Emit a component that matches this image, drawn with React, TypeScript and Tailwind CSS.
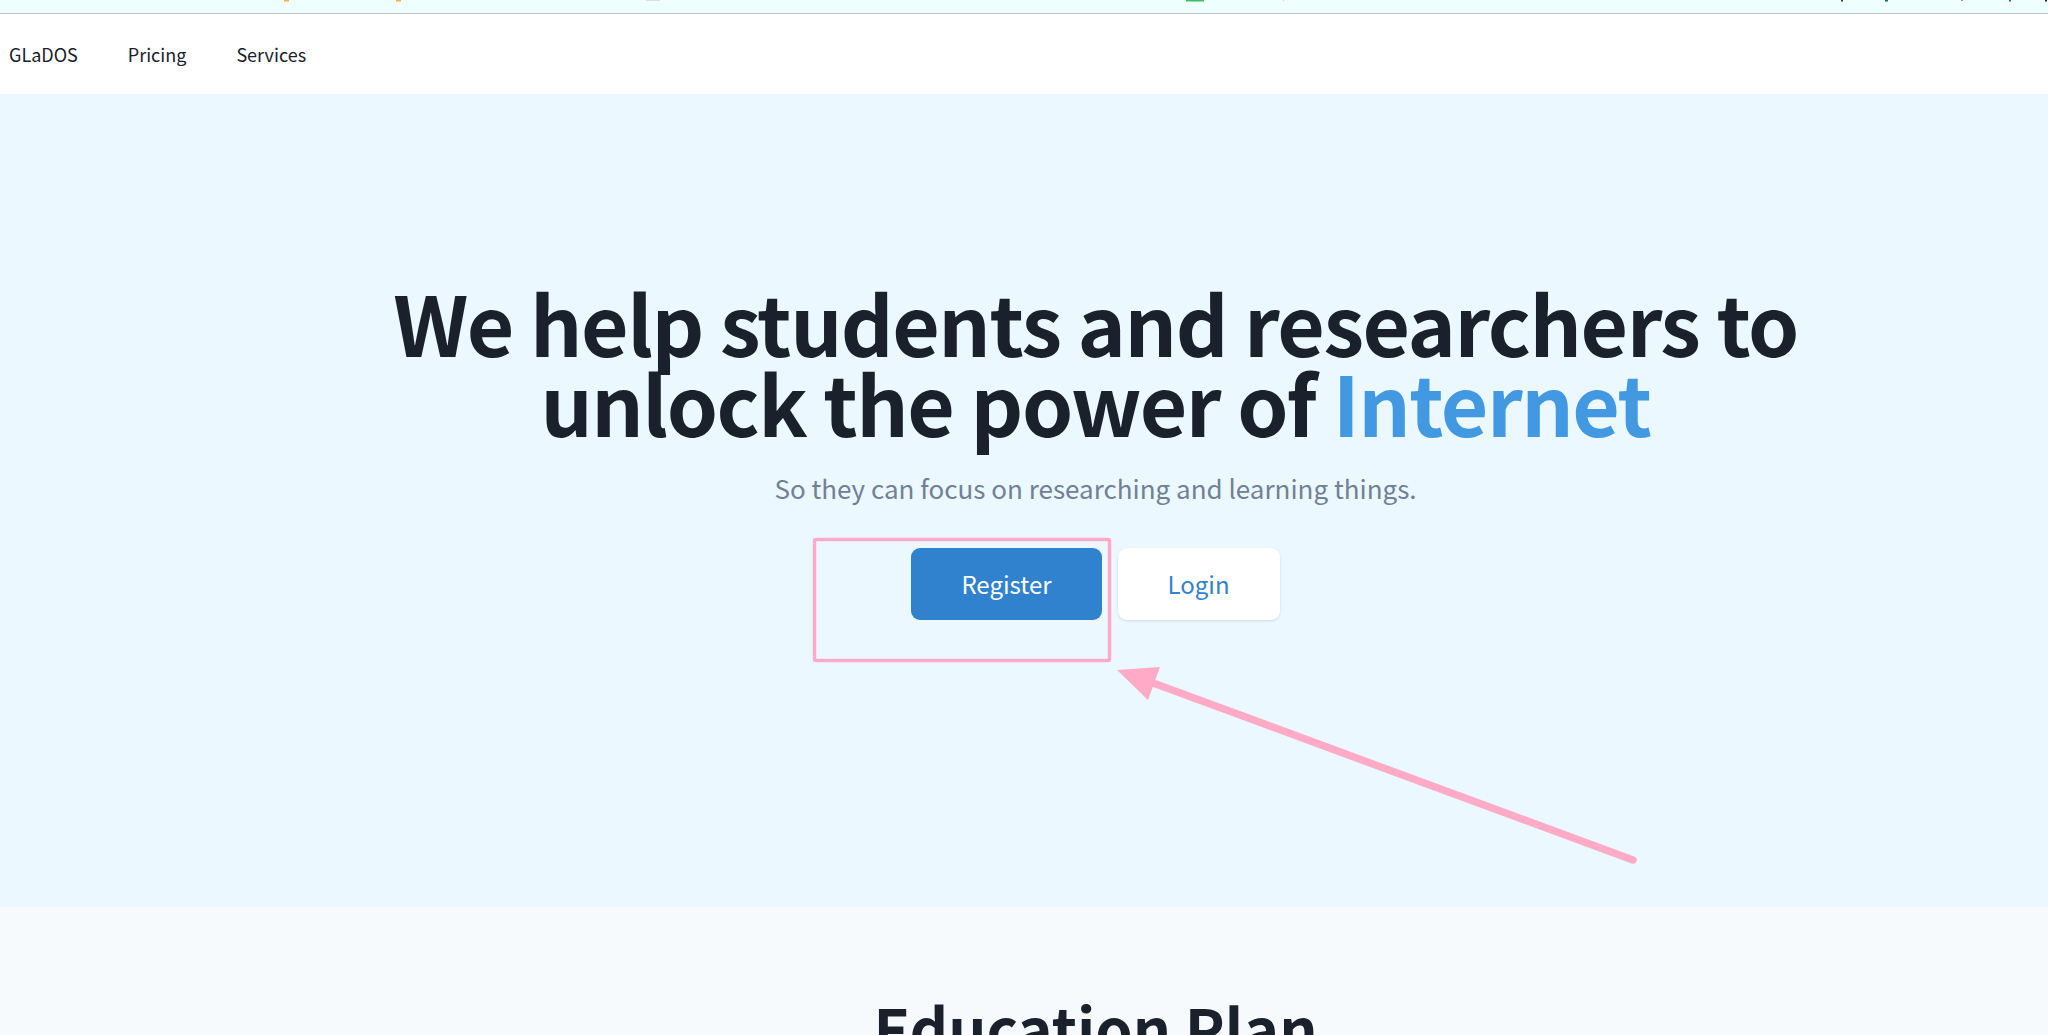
export default function App() {
  return (
    <div className="relative h-screen w-full overflow-hidden font-['Noto_Sans_CJK_SC','Noto_Sans',sans-serif] text-[#1a202c]">
      {/* browser strip left over at the top of the capture */}
      <div className="relative h-[14px] bg-[#effffe] border-b border-[#b9c9c7]">
        <svg className="absolute left-0 top-0" width="2048" height="3">
          <rect x="284" y="0" width="5" height="1.5" fill="#f4b042" />
          <rect x="396" y="0" width="5" height="1.5" fill="#f4b042" />
          <rect x="646" y="0" width="14" height="1" fill="#dddddd" />
          <rect x="1186" y="0" width="18" height="1.5" fill="#3fbf5f" />
          <rect x="1283" y="0" width="1" height="1" fill="#cccccc" />
          <rect x="1841" y="0" width="2" height="1.5" fill="#553311" />
          <rect x="1885" y="0" width="3" height="1.5" fill="#0b6f7f" />
          <rect x="1961" y="0" width="2" height="1" fill="#8899aa" />
          <rect x="2009" y="0" width="2" height="1.5" fill="#1a6fb0" />
          <rect x="2045" y="0" width="2" height="1.5" fill="#222222" />
        </svg>
      </div>

      {/* NAV */}
      <nav className="h-[80px] bg-white flex items-center pl-[9px] gap-[50px] text-[18px] text-[#1a202c]">
        <a>GLaDOS</a>
        <a>Pricing</a>
        <a>Services</a>
      </nav>

      {/* HERO */}
      <section className="h-[813px] bg-[#ebf8ff] flex flex-col items-center pl-[143px] pt-[188px]">
        <h1 className="text-center font-bold text-[82px] leading-[80px] tracking-[-1.5px] whitespace-nowrap text-[#1a202c]">
          We help students and researchers to
          <br />
          unlock the power of <span className="text-[#4299e1]">Internet</span>
        </h1>
        <p className="mt-[26px] text-[26px] leading-[40px] text-[#718096]">
          So they can focus on researching and learning things.
        </p>
        <div className="mt-[40px] flex gap-4">
          <button className="h-[72px] px-[50px] rounded-[9px] bg-[#3182ce] text-white text-[24px]">
            Register
          </button>
          <button className="h-[72px] px-[50px] rounded-[9px] bg-white text-[#3182ce] text-[24px] shadow-[0_1px_3px_rgba(0,0,0,0.12)]">
            Login
          </button>
        </div>
      </section>

      {/* NEXT SECTION */}
      <section className="h-[128px] bg-[#f7fafc] flex flex-col items-center pl-[143px] pt-[85px]">
        <h2 className="font-bold text-[60px] leading-[70px] whitespace-nowrap text-[#1a202c]">
          Education Plan
        </h2>
      </section>

      {/* annotation drawn over the capture */}
      <svg
        className="absolute left-0 top-0 pointer-events-none"
        width="2048"
        height="1035"
      >
        <rect x="814.5" y="539.5" width="295" height="121" rx="1.5" fill="none" stroke="#ffabc8" strokeWidth="3.5" />
        <line x1="1145" y1="680" x2="1633" y2="860" stroke="#ffabc8" strokeWidth="7.5" strokeLinecap="round" />
        <polygon points="1117,670 1160,667 1148,700" fill="#ffabc8" />
      </svg>
    </div>
  );
}
